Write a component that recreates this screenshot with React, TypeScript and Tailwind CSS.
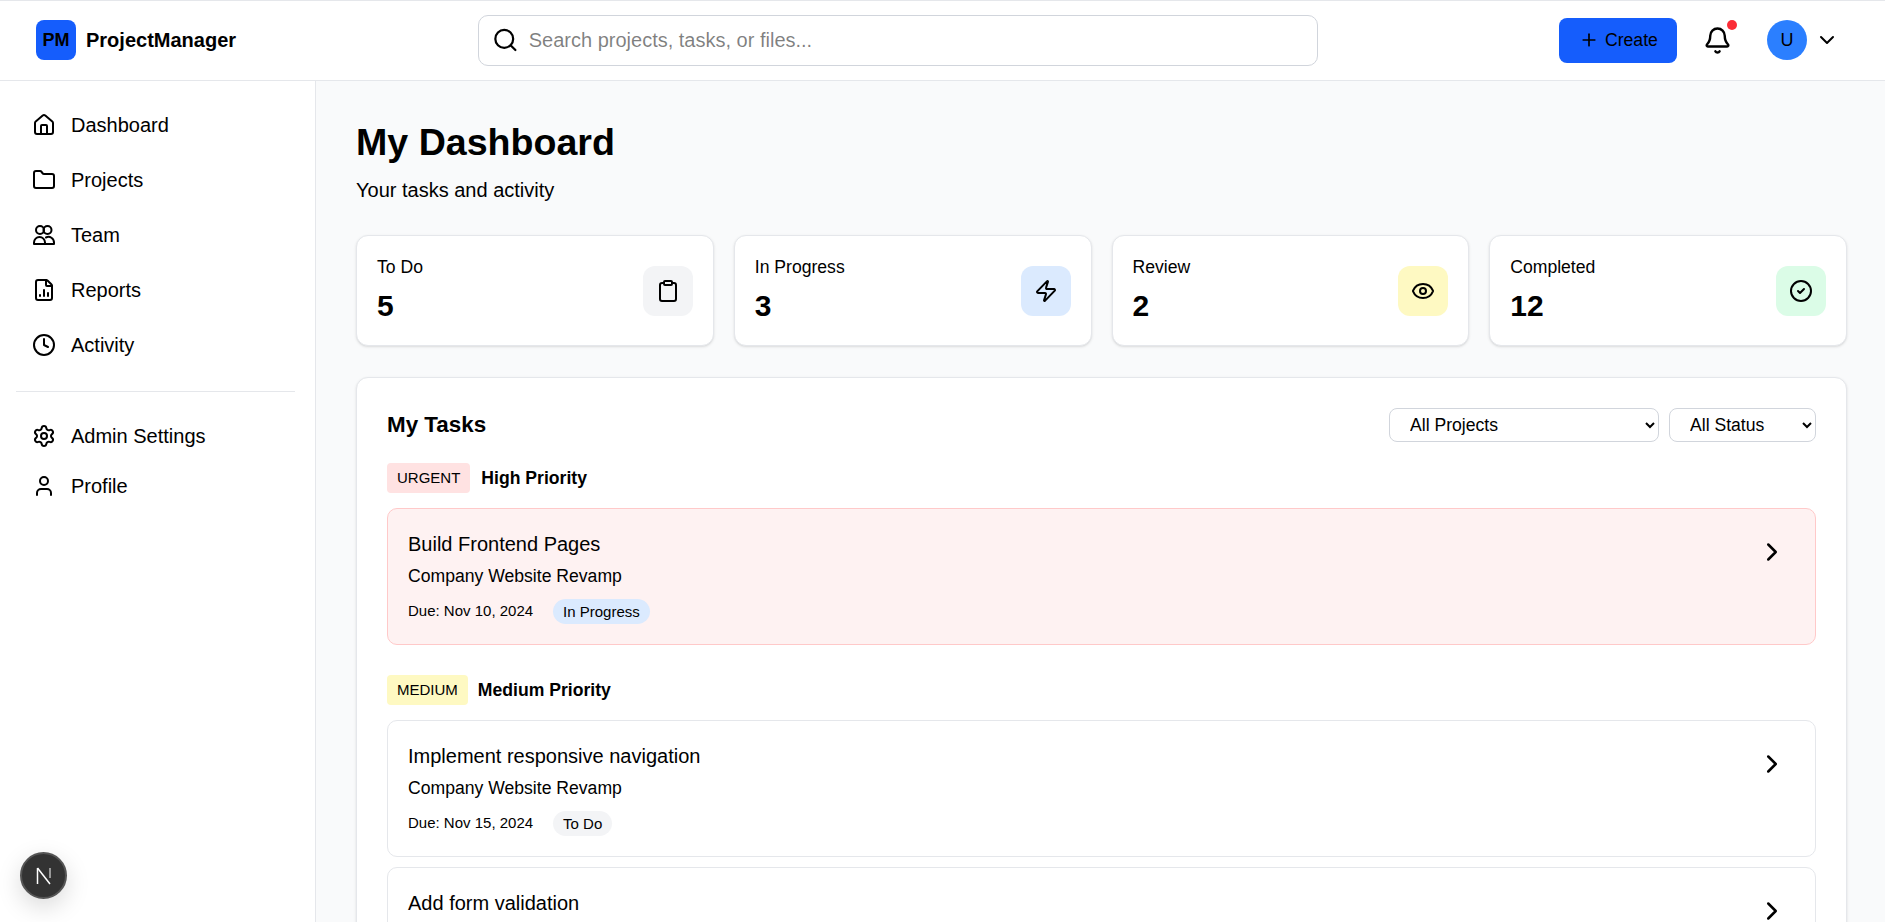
import {
  Bell,
  ChevronDown,
  ChevronRight,
  CircleCheck,
  Clipboard,
  Clock,
  Eye,
  FileChartColumn,
  Folder,
  House,
  Plus,
  Search,
  Settings,
  User,
  Zap,
} from "lucide-react";

const TeamIcon = () => (
  <svg width="24" height="24" viewBox="0 0 24 24" fill="none" stroke="currentColor" strokeWidth="2" strokeLinecap="round" strokeLinejoin="round">
    <circle cx="8" cy="7" r="4" />
    <circle cx="15.5" cy="7" r="4" />
    <path d="M2 21v-1.5a5.5 5.5 0 0 1 11 0V21H2" />
    <path d="M13 21h9v-1.5a5.5 5.5 0 0 0-8-5" />
  </svg>
);

const mainNav = [
  { label: "Dashboard", icon: <House size={24} /> },
  { label: "Projects", icon: <Folder size={24} /> },
  { label: "Team", icon: <TeamIcon /> },
  { label: "Reports", icon: <FileChartColumn size={24} /> },
  { label: "Activity", icon: <Clock size={24} /> },
];

const bottomNav = [
  { label: "Admin Settings", icon: <Settings size={24} /> },
  { label: "Profile", icon: <User size={24} /> },
];

const stats = [
  { label: "To Do", value: "5", icon: Clipboard, bg: "bg-gray-100" },
  { label: "In Progress", value: "3", icon: Zap, bg: "bg-blue-100" },
  { label: "Review", value: "2", icon: Eye, bg: "bg-yellow-100" },
  { label: "Completed", value: "12", icon: CircleCheck, bg: "bg-green-100" },
];

type Task = {
  title: string;
  project: string;
  due: string;
  status: string;
  statusBg: string;
  urgent?: boolean;
};

const TaskCard = ({ task }: { task: Task }) => (
  <div
    className={`flex justify-between rounded-[10px] border p-5 ${
      task.urgent ? "border-red-200 bg-red-50" : "border-gray-200 bg-white"
    }`}
  >
    <div>
      <h4 className="text-[20px] leading-[30px] font-normal">{task.title}</h4>
      <p className="mt-[4px] text-[17.6px] leading-[27px]">{task.project}</p>
      <div className="mt-[9px] flex items-center gap-5">
        <span className="text-[15px]">{task.due}</span>
        <span className={`rounded-full px-2.5 text-[15px] leading-[25px] ${task.statusBg}`}>{task.status}</span>
      </div>
    </div>
    <button className="mt-[8px] mr-[8px] h-[30px] w-[30px]">
      <ChevronRight size={30} />
    </button>
  </div>
);

const App = () => {
  return (
    <div className="flex h-screen flex-col overflow-hidden border-t border-gray-200 bg-gray-50 font-['Liberation_Sans',Arial,sans-serif] text-black">
      <header className="flex h-[80px] shrink-0 items-center border-b border-gray-200 bg-white pr-[46px] pb-px pl-9">
        <div className="flex w-[442px] items-center gap-[10px]">
          <div className="flex h-10 w-10 items-center justify-center rounded-lg bg-blue-600 text-[18px] font-bold">PM</div>
          <span className="text-[20px] font-bold">ProjectManager</span>
        </div>
        <div className="flex h-[51px] w-[840px] items-center gap-[10px] rounded-[10px] border border-gray-300 bg-white px-[13px]">
          <Search size={28} />
          <input className="w-full bg-transparent text-[20px] outline-none" placeholder="Search projects, tasks, or files..." />
        </div>
        <div className="ml-auto flex items-center">
          <button className="flex h-[45px] w-[118px] items-center gap-[6px] rounded-lg bg-blue-600 pl-[20px] text-[17.6px]">
            <Plus size={20} />
            Create
          </button>
          <div className="relative ml-5 flex h-10 w-10 items-center justify-center">
            <Bell size={29} />
            <span className="absolute top-0 right-0 h-2.5 w-2.5 rounded-full bg-red-500" />
          </div>
          <div className="ml-[30px] flex h-10 w-10 items-center justify-center rounded-full bg-blue-500 text-[18px]">U</div>
          <ChevronDown size={24} className="ml-2" />
        </div>
      </header>

      <div className="flex min-h-0 flex-1">
        <aside className="w-[316px] shrink-0 border-r border-gray-200 bg-white py-[21px] pr-5 pl-4">
          <nav className="flex flex-col gap-[10px]">
            {mainNav.map((item) => (
              <a key={item.label} className="flex h-[45px] items-center gap-[15px] px-4 text-[20px]">
                {item.icon}
                {item.label}
              </a>
            ))}
          </nav>
          <div className="mt-[24px] border-t border-gray-200 pt-[21px]">
            <nav className="flex flex-col gap-[5px]">
              {bottomNav.map((item) => (
                <a key={item.label} className="flex h-[45px] items-center gap-[15px] px-4 text-[20px]">
                  {item.icon}
                  {item.label}
                </a>
              ))}
            </nav>
          </div>
        </aside>

        <main className="min-w-0 flex-1 overflow-hidden pt-10 pr-[38px] pl-10">
          <h1 className="text-[37.6px] leading-[43px] font-bold">My Dashboard</h1>
          <p className="mt-[11px] text-[20px] leading-[30px]">Your tasks and activity</p>

          <div className="mt-[30px] grid grid-cols-4 gap-5">
            {stats.map((stat) => (
              <div
                key={stat.label}
                className="flex items-center justify-between rounded-xl border border-gray-200 bg-white p-5 shadow-sm"
              >
                <div>
                  <p className="text-[17.6px] leading-[23px]">{stat.label}</p>
                  <p className="mt-[8px] text-[30px] leading-[38px] font-bold">{stat.value}</p>
                </div>
                <div className={`flex h-[50px] w-[50px] items-center justify-center rounded-xl ${stat.bg}`}>
                  <stat.icon size={24} />
                </div>
              </div>
            ))}
          </div>

          <section className="mt-[31px] rounded-xl border border-gray-200 bg-white p-[30px] shadow-sm">
            <div className="flex items-center justify-between">
              <h2 className="text-[22.4px] font-bold">My Tasks</h2>
              <div className="flex gap-[10px]">
                <select className="h-[34px] w-[270px] rounded-lg border border-gray-300 bg-white px-4 text-[17.6px]">
                  <option>All Projects</option>
                </select>
                <select className="h-[34px] w-[147px] rounded-lg border border-gray-300 bg-white px-4 text-[17.6px]">
                  <option>All Status</option>
                </select>
              </div>
            </div>

            <div className="mt-[21px] flex items-center gap-[11px]">
              <span className="rounded bg-red-100 px-2.5 text-[15px] leading-[30px]">URGENT</span>
              <h3 className="text-[17.6px] font-bold">High Priority</h3>
            </div>
            <div className="mt-[15px]">
              <TaskCard
                task={{
                  title: "Build Frontend Pages",
                  project: "Company Website Revamp",
                  due: "Due: Nov 10, 2024",
                  status: "In Progress",
                  statusBg: "bg-blue-100",
                  urgent: true,
                }}
              />
            </div>

            <div className="mt-[30px] flex items-center gap-[10px]">
              <span className="rounded bg-yellow-100 px-2.5 text-[15px] leading-[30px]">MEDIUM</span>
              <h3 className="text-[17.6px] font-bold">Medium Priority</h3>
            </div>
            <div className="mt-[15px] flex flex-col gap-[10px]">
              <TaskCard
                task={{
                  title: "Implement responsive navigation",
                  project: "Company Website Revamp",
                  due: "Due: Nov 15, 2024",
                  status: "To Do",
                  statusBg: "bg-gray-100",
                }}
              />
              <TaskCard
                task={{
                  title: "Add form validation",
                  project: "Company Website Revamp",
                  due: "Due: Nov 18, 2024",
                  status: "To Do",
                  statusBg: "bg-gray-100",
                }}
              />
            </div>
          </section>
        </main>
      </div>

      <div className="fixed bottom-[23px] left-[20px] flex h-[47px] w-[47px] items-center justify-center rounded-full border-2 border-[#555] bg-[#333] shadow-[0_8px_24px_rgba(0,0,0,0.15)]">
        <svg width="18" height="18" viewBox="0 0 18 18" fill="none">
          <path d="M2.5 1V17" stroke="white" strokeWidth="1.5" />
          <path d="M2.5 1L15 17" stroke="white" strokeWidth="1.5" />
          <path d="M15 1V11" stroke="#bbb" strokeWidth="1.5" />
        </svg>
      </div>
    </div>
  );
};

export default App;
